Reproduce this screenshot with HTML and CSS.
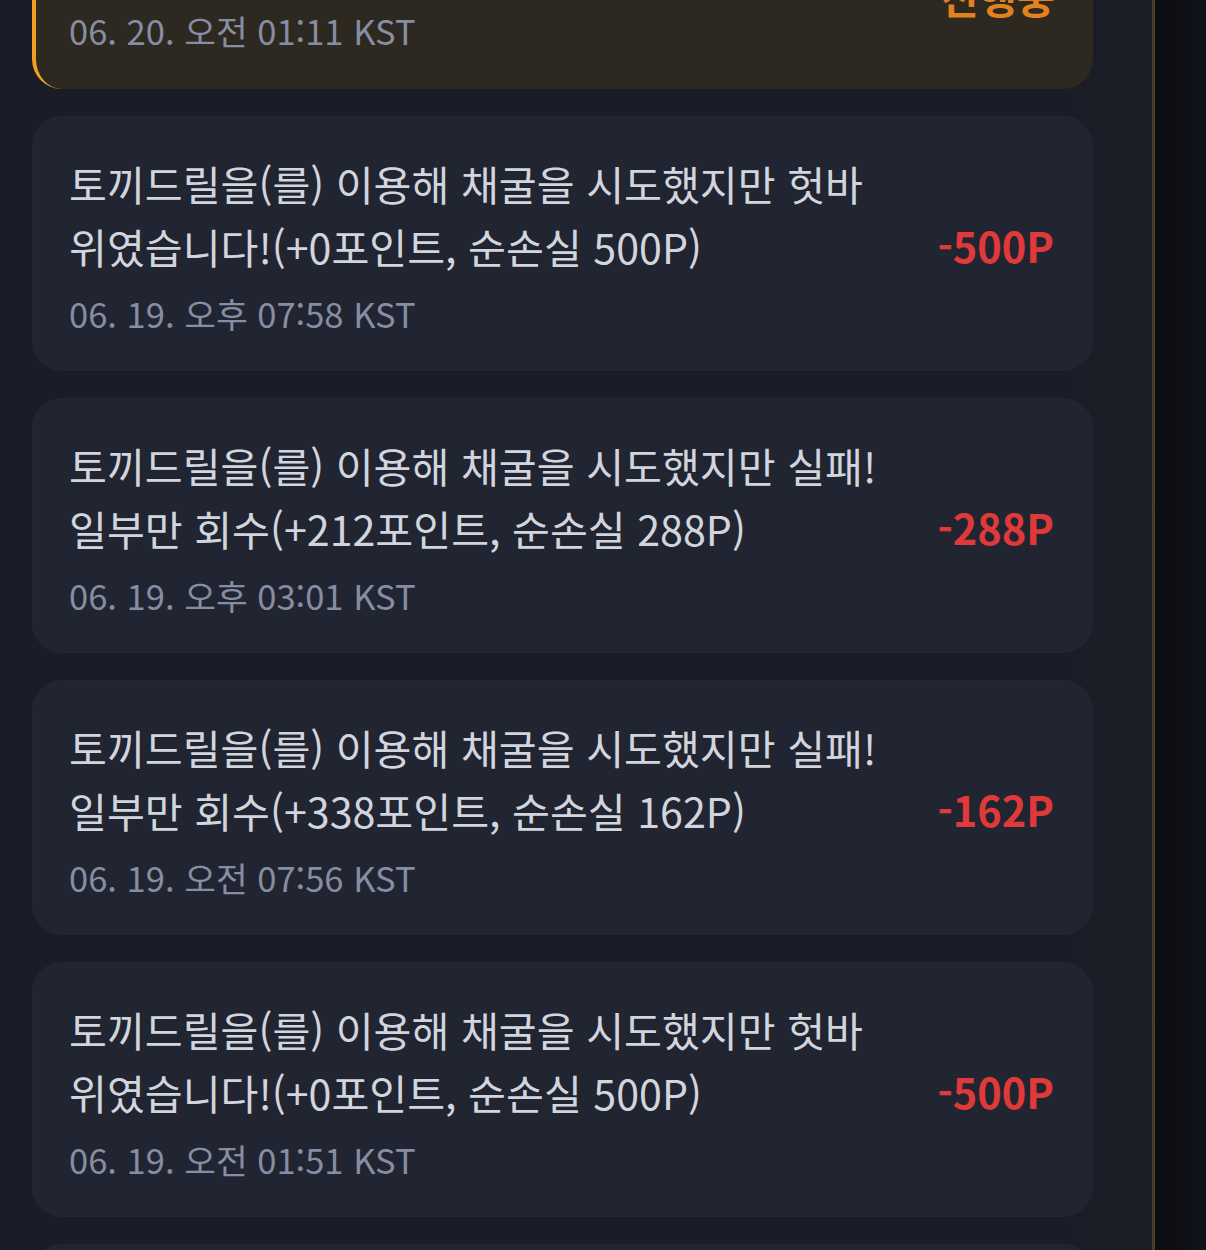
FILE: index.html
```html
<!DOCTYPE html>
<html lang="ko">
<head>
<meta charset="utf-8">
<title>채굴 기록</title>
<link rel="stylesheet" href="styles.css">
</head>
<body>
<div class="screen">
  <main class="panel">
    <ul class="log">
      <li class="card card-active">
        <div class="body">
          <p class="msg">토끼드릴을(를) 이용해 채굴을 시도하고 있습니다.<br>잠시만 기다려 주세요!</p>
          <p class="time">06. 20. 오전 01:11 KST</p>
        </div>
        <span class="status">진행중</span>
      </li>
      <li class="card">
        <div class="body">
          <p class="msg">토끼드릴을(를) 이용해 채굴을 시도했지만 헛바<br>위였습니다!(+0포인트, 순손실 500P)</p>
          <p class="time">06. 19. 오후 07:58 KST</p>
        </div>
        <span class="amount">-500P</span>
      </li>
      <li class="card">
        <div class="body">
          <p class="msg">토끼드릴을(를) 이용해 채굴을 시도했지만 실패!<br>일부만 회수(+212포인트, 순손실 288P)</p>
          <p class="time">06. 19. 오후 03:01 KST</p>
        </div>
        <span class="amount">-288P</span>
      </li>
      <li class="card">
        <div class="body">
          <p class="msg">토끼드릴을(를) 이용해 채굴을 시도했지만 실패!<br>일부만 회수(+338포인트, 순손실 162P)</p>
          <p class="time">06. 19. 오전 07:56 KST</p>
        </div>
        <span class="amount">-162P</span>
      </li>
      <li class="card">
        <div class="body">
          <p class="msg">토끼드릴을(를) 이용해 채굴을 시도했지만 헛바<br>위였습니다!(+0포인트, 순손실 500P)</p>
          <p class="time">06. 19. 오전 01:51 KST</p>
        </div>
        <span class="amount">-500P</span>
      </li>
      <li class="card">
        <div class="body">
          <p class="msg">토끼드릴을(를) 이용해 채굴을 시도했지만 실패!<br>일부만 회수(+120포인트, 순손실 380P)</p>
          <p class="time">06. 18. 오후 09:40 KST</p>
        </div>
        <span class="amount">-380P</span>
      </li>
    </ul>
  </main>
  <div class="divider"></div>
  <aside class="backdrop"></aside>
</div>
</body>
</html>
```

FILE: styles.css
```css
html, body {
  margin: 0;
  padding: 0;
  height: 100%;
  overflow: hidden;
  background: #0e1016;
  font-family: "Noto Sans CJK KR", "Noto Sans", sans-serif;
}

.screen {
  display: flex;
  height: 1250px;
  overflow: hidden;
}

.panel {
  width: 1152px;
  flex: none;
  background: linear-gradient(to right, #1a1d27 0%, #1a1d27 93%, #1d1e25 100%);
  padding: 0 59px 0 32px;
  box-sizing: border-box;
  overflow: hidden;
}

.divider {
  width: 3px;
  flex: none;
  background: #4a3b2a;
}

.backdrop {
  flex: 1;
  background: linear-gradient(to right, #0c0d12, #10131a);
}

.log {
  list-style: none;
  margin: -166px 0 0;
  padding: 0;
  display: flex;
  flex-direction: column;
  gap: 27px;
}

.card {
  height: 255px;
  box-sizing: border-box;
  display: flex;
  align-items: center;
  justify-content: space-between;
  gap: 24px;
  padding: 35px 38px 32px 36px;
  background: #212531;
  border: 1px solid #232734;
  border-radius: 30px;
  overflow: hidden;
}

.card-active {
  background: #2d2921;
  border: none;
  border-left: 4px solid #f2a01f;
  padding-left: 33px;
}

.body {
  flex: 1;
  min-width: 0;
  align-self: flex-start;
}

.msg {
  margin: 0;
  font-size: 41.2px;
  line-height: 63px;
  color: #d2d5dd;
  white-space: nowrap;
  overflow: hidden;
}

.time {
  margin: 12px 0 0;
  font-size: 34.5px;
  line-height: 46px;
  color: #878da2;
  white-space: nowrap;
}

.amount {
  flex: none;
  font-size: 41.5px;
  font-weight: 700;
  color: #e0393a;
}

.status {
  flex: none;
  align-self: flex-end;
  margin-bottom: 31px;
  font-size: 41.5px;
  font-weight: 700;
  color: #e2821f;
}
```
